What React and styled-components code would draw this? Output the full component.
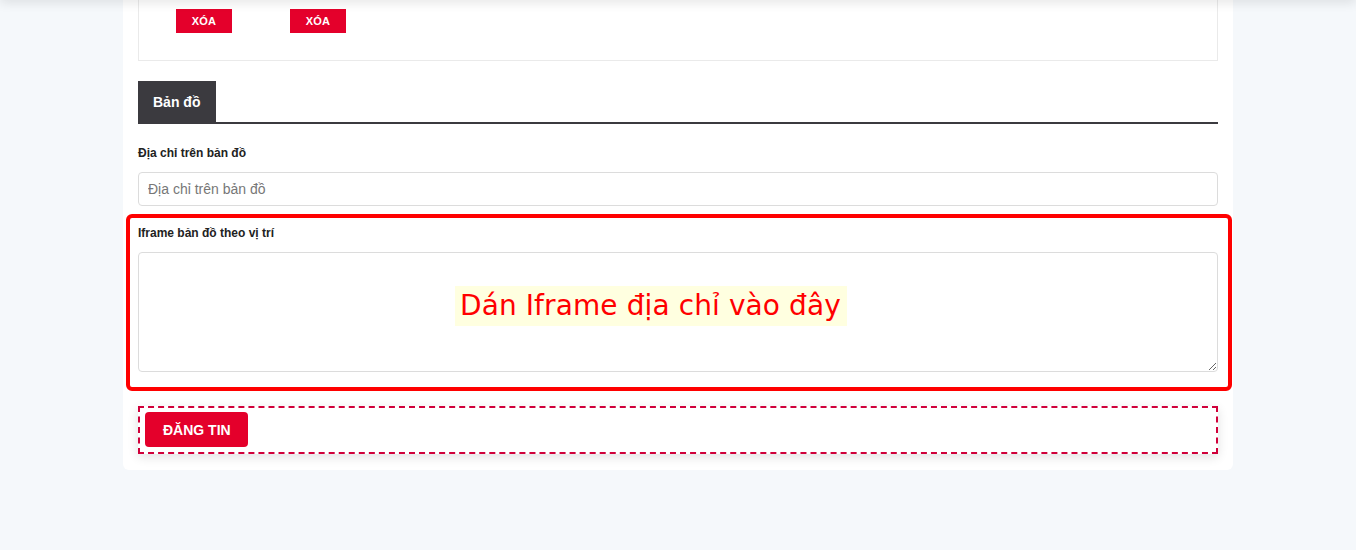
import styled, {createGlobalStyle} from "styled-components";

const GlobalStyle = createGlobalStyle`
  body {
    margin: 0;
    background: #f5f8fb;
    font-family: "Liberation Sans", Arial, sans-serif;
    color: #222;
  }
  * { box-sizing: border-box; }
`;

const TopShadow = styled.div`
  position: fixed;
  top: -10px;
  left: 0;
  right: 0;
  height: 10px;
  box-shadow: 0 2px 12px rgba(0, 0, 0, 0.12);
  z-index: 5;
`;

const Page = styled.div`
  width: 1110px;
  margin: 0 0 0 123px;
  padding-bottom: 80px;
`;

const Card = styled.div`
  background: #fff;
  border-radius: 0 0 6px 6px;
  padding: 0 15px 16px;
`;

const ImageBox = styled.div`
  border: 1px solid #eaeaea;
  border-top: none;
  height: 61px;
  display: flex;
  gap: 58px;
  padding: 9px 0 0 37px;
`;

const DeleteButton = styled.button`
  width: 56px;
  height: 24px;
  border: none;
  background: #e4002b;
  color: #fff;
  font-family: "Liberation Sans", Arial, sans-serif;
  font-weight: 700;
  font-size: 11px;
  letter-spacing: 0.3px;
  cursor: pointer;
`;

const TabBar = styled.div`
  margin-top: 20px;
  border-bottom: 2px solid #3b3a3f;
  display: flex;
`;

const Tab = styled.div`
  background: #3b3a3f;
  color: #fff;
  font-weight: 700;
  font-size: 14px;
  height: 41px;
  padding: 0 15px 0 15px;
  width: 78px;
  display: flex;
  align-items: center;
`;

const FormGroup = styled.div`
  padding-top: ${props => props.top ?? "0"};
`;

const Label = styled.label`
  display: block;
  font-size: 12px;
  font-weight: 700;
  color: #222;
  margin-bottom: 12px;
`;

const Input = styled.input`
  display: block;
  width: 100%;
  height: 34px;
  border: 1px solid #dcdcdc;
  border-radius: 4px;
  padding: 0 9px;
  font-family: "Liberation Sans", Arial, sans-serif;
  font-size: 14px;
  outline: none;
  &::placeholder { color: #777; }
`;

const Highlight = styled.div`
  margin: 8px -14px 0 -12px;
  border: 4px solid #ff0000;
  border-radius: 6px;
  padding: 8px 10px 15px 8px;
`;

const TextareaWrap = styled.div`
  position: relative;
`;

const Textarea = styled.textarea`
  display: block;
  width: 100%;
  height: 120px;
  border: 1px solid #dcdcdc;
  border-radius: 4px;
  resize: vertical;
  outline: none;
`;

const Note = styled.span`
  position: absolute;
  left: 317px;
  top: 34px;
  background: #ffffe0;
  color: #ff0000;
  font-family: "DejaVu Sans", Tahoma, sans-serif;
  font-size: 28px;
  line-height: 40px;
  padding: 0 6px 0 5px;
  letter-spacing: 0.1px;
  pointer-events: none;
`;

const SubmitBar = styled.div`
  margin-top: 15px;
  border: 2px dashed #d0003a;
  padding: 4px 5px 5px;
  box-shadow: 0 3px 10px rgba(0, 0, 0, 0.12);
`;

const SubmitButton = styled.button`
  display: block;
  height: 35px;
  padding: 0 17px 0 18px;
  border: none;
  border-radius: 4px;
  background: #e4002b;
  color: #fff;
  font-family: "Liberation Sans", Arial, sans-serif;
  font-weight: 700;
  font-size: 14px;
  cursor: pointer;
`;

const App = () => {
  return (
    <>
      <GlobalStyle/>
      <TopShadow/>
      <Page>
        <Card>
          <ImageBox>
            <DeleteButton>XÓA</DeleteButton>
            <DeleteButton>XÓA</DeleteButton>
          </ImageBox>
          <TabBar>
            <Tab>Bản đồ</Tab>
          </TabBar>
          <FormGroup top={"22px"}>
            <Label>Địa chỉ trên bản đồ</Label>
            <Input placeholder={"Địa chỉ trên bản đồ"}/>
          </FormGroup>
          <Highlight>
            <Label>Iframe bản đồ theo vị trí</Label>
            <TextareaWrap>
              <Textarea/>
              <Note>Dán Iframe địa chỉ vào đây</Note>
            </TextareaWrap>
          </Highlight>
          <SubmitBar>
            <SubmitButton>ĐĂNG TIN</SubmitButton>
          </SubmitBar>
        </Card>
      </Page>
    </>
  );
};

export default App;
